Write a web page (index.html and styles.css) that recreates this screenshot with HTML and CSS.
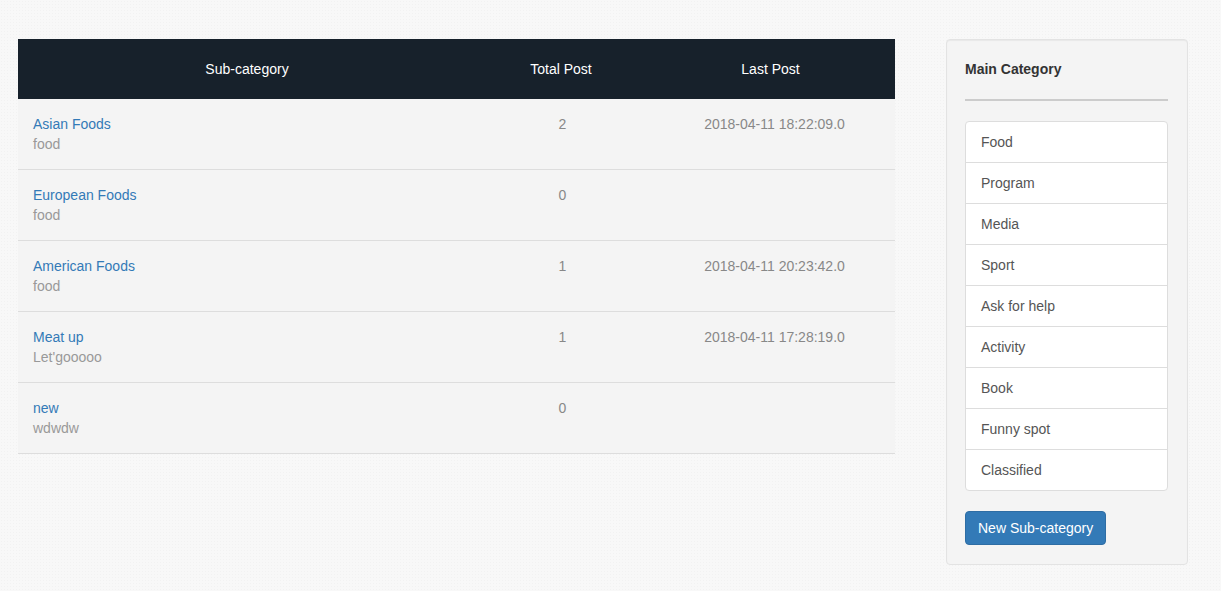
FILE: index.html
```html
<!DOCTYPE html>
<html>
<head>
<meta charset="utf-8">
<link rel="stylesheet" href="styles.css">
</head>
<body>
<div class="page">
  <main class="main">
    <table class="cats">
      <thead>
        <tr><th class="c1">Sub-category</th><th class="c2">Total Post</th><th class="c3">Last Post</th></tr>
      </thead>
      <tbody>
        <tr><td class="c1"><a href="#">Asian Foods</a><div class="sub">food</div></td><td class="num">2</td><td class="num date">2018-04-11 18:22:09.0</td></tr>
        <tr><td class="c1"><a href="#">European Foods</a><div class="sub">food</div></td><td class="num">0</td><td class="num date"></td></tr>
        <tr><td class="c1"><a href="#">American Foods</a><div class="sub">food</div></td><td class="num">1</td><td class="num date">2018-04-11 20:23:42.0</td></tr>
        <tr><td class="c1"><a href="#">Meat up</a><div class="sub">Let'gooooo</div></td><td class="num">1</td><td class="num date">2018-04-11 17:28:19.0</td></tr>
        <tr><td class="c1"><a href="#">new</a><div class="sub">wdwdw</div></td><td class="num">0</td><td class="num date"></td></tr>
      </tbody>
    </table>
  </main>
  <aside class="well">
    <h4 class="well-title">Main Category</h4>
    <hr class="divider">
    <ul class="list-group">
      <li>Food</li>
      <li>Program</li>
      <li>Media</li>
      <li>Sport</li>
      <li>Ask for help</li>
      <li>Activity</li>
      <li>Book</li>
      <li>Funny spot</li>
      <li>Classified</li>
    </ul>
    <button class="btn">New Sub-category</button>
  </aside>
</div>
</body>
</html>
```
FILE: styles.css
```css
html, body {
  margin: 0;
  padding: 0;
}
body {
  background-color: #f8f8f8;
  background-image: radial-gradient(#f2f2f2 0.6px, transparent 0.8px);
  background-size: 3px 3px;
  font-family: "Liberation Sans", Arial, sans-serif;
  font-size: 14px;
  line-height: 20px;
  color: #333;
}
.page {
  display: flex;
  align-items: flex-start;
  padding: 39px 33px 0 18px;
  gap: 51px;
}
.main {
  width: 877px;
  flex: none;
}
.cats {
  width: 100%;
  border-collapse: collapse;
  table-layout: fixed;
}
.cats th {
  background: #17212b;
  color: #fff;
  font-weight: normal;
  padding: 20px 0;
  text-align: center;
  line-height: 20px;
}
.cats th.c1 { width: 458px; }
.cats th.c2 { width: 170px; }
.cats td {
  background: #f4f4f4;
  padding: 15px 15px 15px 15px;
  border-bottom: 1px solid #dddddd;
  vertical-align: top;
}
.cats td.num {
  text-align: center;
  color: #888;
  padding-left: 3px;
  padding-right: 0;
}
.cats td.date {
  padding-left: 8px;
}
.cats a {
  color: #337ab7;
  text-decoration: none;
}
.sub {
  color: #999;
}
.well {
  width: 242px;
  box-sizing: border-box;
  flex: none;
  background: #f4f4f4;
  border: 1px solid #e3e3e3;
  border-radius: 4px;
  box-shadow: inset 0 1px 1px rgba(0,0,0,0.05);
  padding: 19px 19px 19px 18px;
}
.well-title {
  margin: 0;
  font-size: 14px;
  font-weight: bold;
  line-height: 20px;
  color: #333;
}
.divider {
  margin: 20px 0 20px 0;
  border: 0;
  border-top: 2px solid #cccccc;
  height: 0;
}
.list-group {
  list-style: none;
  margin: 0 0 20px 0;
  padding: 0;
  background: #fff;
  border: 1px solid #ddd;
  border-radius: 4px;
}
.list-group li {
  padding: 10px 15px;
  color: #555;
  border-top: 1px solid #ddd;
  line-height: 20px;
}
.list-group li:first-child {
  border-top: 0;
}
.btn {
  display: block;
  font-family: inherit;
  font-size: 14px;
  line-height: 20px;
  padding: 6px 12px;
  color: #fff;
  background: #337ab7;
  border: 1px solid #2e6da4;
  border-radius: 4px;
  cursor: pointer;
}
```
